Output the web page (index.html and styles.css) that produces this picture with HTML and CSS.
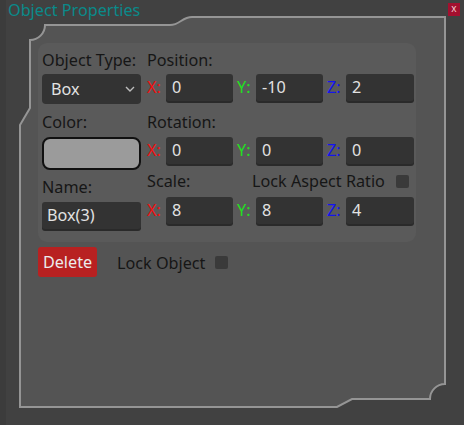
FILE: index.html
```html
<!DOCTYPE html>
<html>
<head>
<meta charset="utf-8">
<link rel="stylesheet" href="styles.css">
</head>
<body>
<div class="window">
  <svg class="frame" width="464" height="425" viewBox="0 0 464 425">
    <path class="frame-fill" d="M45 25 L170 25 C180 25 182 17 192 17 L445 17 L445 384 A15 15 0 0 0 430 399 L352 399 L337 407 L20 407 L20 125 L30 108 L30 40 A15 15 0 0 0 45 25 Z"/>
  </svg>
  <div class="titlebar">
    <span class="title">Object Properties</span>
    <span class="close">x</span>
  </div>
  <div class="content">
    <div class="group">
      <div class="col-left">
        <div class="label">Object Type:</div>
        <div class="combo"><span>Box</span>
          <svg class="chev" width="10" height="6" viewBox="0 0 10 6"><path d="M1 1 L5 5 L9 1"/></svg>
        </div>
        <div class="label l-color">Color:</div>
        <div class="swatch"></div>
        <div class="label l-name">Name:</div>
        <div class="field name-field">Box(3)</div>
      </div>
      <div class="col-right">
        <div class="label">Position:</div>
        <div class="axes r-pos">
          <span class="ax x">X:</span><div class="field">0</div>
          <span class="ax y">Y:</span><div class="field">-10</div>
          <span class="ax z">Z:</span><div class="field">2</div>
        </div>
        <div class="label l-rot">Rotation:</div>
        <div class="axes r-rot">
          <span class="ax x">X:</span><div class="field">0</div>
          <span class="ax y">Y:</span><div class="field">0</div>
          <span class="ax z">Z:</span><div class="field">0</div>
        </div>
        <div class="scale-row">
          <span class="label scale-label">Scale:</span>
          <span class="label">Lock Aspect Ratio</span>
          <span class="check aspect-check"></span>
        </div>
        <div class="axes r-scale">
          <span class="ax x">X:</span><div class="field">8</div>
          <span class="ax y">Y:</span><div class="field">8</div>
          <span class="ax z">Z:</span><div class="field">4</div>
        </div>
      </div>
    </div>
    <div class="actions">
      <div class="delete">Delete</div>
      <span class="label lock-label">Lock Object</span>
      <span class="check lock-check"></span>
    </div>
  </div>
</div>
</body>
</html>
```

FILE: styles.css
```css
html, body {
  margin: 0;
  padding: 0;
  background: #414141;
}
.window {
  position: relative;
  width: 464px;
  height: 425px;
  overflow: hidden;
  background: #414141;
  box-shadow: inset 6px 0 0 #3c3c3c;
  font-family: "Noto Sans", "Open Sans", sans-serif;
  font-size: 16.2px;
}
.frame {
  position: absolute;
  left: 0;
  top: 0;
}
.frame-fill {
  fill: #545454;
  stroke: #959595;
  stroke-width: 2;
}
.titlebar {
  position: relative;
  height: 20px;
  display: flex;
  justify-content: space-between;
  align-items: flex-start;
  padding: 0 4px 0 8px;
}
.title {
  color: #0a8a8a;
  line-height: 21px;
}
.close {
  margin-top: 3px;
  width: 12px;
  height: 13px;
  background: #a3102f;
  color: #f2c8d0;
  font-size: 10px;
  line-height: 11px;
  text-align: center;
}
.content {
  position: relative;
  padding: 23px 0 0 38px;
}
.group {
  width: 372px;
  display: flex;
  gap: 6px;
  padding: 5px 2px 13px 4px;
  background: #5a5a5a;
  border-radius: 9px;
}
.label {
  color: #161616;
  line-height: 24px;
  height: 24px;
  white-space: nowrap;
}
.col-left {
  width: 99px;
  display: flex;
  flex-direction: column;
}
.combo {
  margin-top: 2px;
  height: 30px;
  background: #333333;
  border-radius: 4px;
  color: #e2e2e2;
  display: flex;
  align-items: center;
  justify-content: space-between;
  padding: 0 6px 0 9px;
}
.chev path {
  fill: none;
  stroke: #bdbdbd;
  stroke-width: 1.4;
}
.l-color { margin-top: 6px; }
.swatch {
  margin-top: 3px;
  height: 29px;
  background: #9b9b9b;
  border: 2px solid #111111;
  border-radius: 8px;
}
.l-name { margin-top: 5px; }
.field {
  height: 27px;
  background: #333333;
  border-radius: 3px;
  box-shadow: 0 2px 0 #2a2a2a;
  color: #e2e2e2;
  line-height: 27px;
  padding-left: 6px;
}
.name-field {
  margin-top: 3px;
  padding-left: 5px;
}
.col-right {
  width: 267px;
  display: flex;
  flex-direction: column;
}
.axes {
  display: grid;
  grid-template-columns: 15px 67px 15px 67px 15px 68px;
  column-gap: 4px;
  align-items: center;
}
.ax {
  line-height: 27px;
  white-space: nowrap;
}
.ax.x { color: #f01010; }
.ax.y { color: #22e022; }
.ax.z { color: #1414f0; }
.r-pos { margin-top: 2px; }
.l-rot { margin-top: 9px; }
.r-rot { margin-top: 3px; }
.scale-row {
  margin-top: 5px;
  display: flex;
  align-items: center;
}
.scale-label { width: 105px; }
.check {
  width: 13px;
  height: 13px;
  background: #3a3a3a;
  border-radius: 2px;
}
.aspect-check {
  margin-left: auto;
  margin-right: 5px;
}
.r-scale { margin-top: 4px; }
.actions {
  margin-top: 5px;
  display: flex;
  align-items: center;
}
.delete {
  width: 59px;
  height: 30px;
  background: #b82121;
  border-radius: 3px;
  color: #ececec;
  line-height: 30px;
  text-align: center;
}
.lock-label {
  margin-left: 20px;
  margin-top: 2px;
}
.lock-check {
  margin-left: 10px;
}
```
